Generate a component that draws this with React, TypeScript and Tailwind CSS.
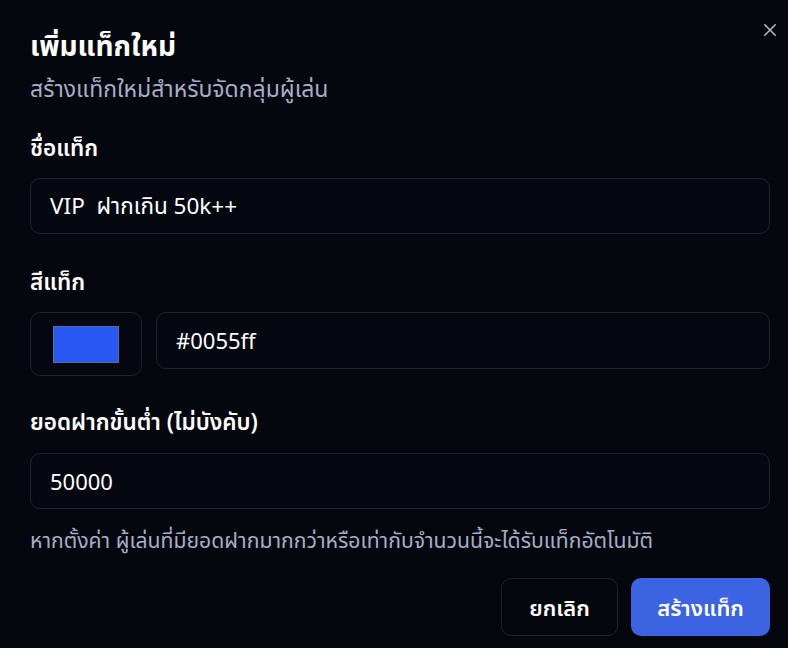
import React from "react";

export default function App() {
  return (
    <div
      className="w-[788px] h-[648px] bg-[#05070f] text-white relative overflow-hidden"
      style={{ fontFamily: '"Noto Sans", "Noto Sans Thai", sans-serif' }}
    >
      <button className="absolute right-[9px] top-[21px] text-[#b9bdc8]">
        <svg width="18" height="18" viewBox="0 0 24 24" fill="none" stroke="currentColor" strokeWidth="2" strokeLinecap="round">
          <path d="M5 5L19 19M19 5L5 19" />
        </svg>
      </button>
      <div className="px-[30px] pt-[26px] pr-[18px] flex flex-col">
        <h1 className="text-[28px] font-bold leading-[38px]">เพิ่มแท็กใหม่</h1>
        <p className="text-[23px] leading-[32px] text-[#a6aec6] mt-[8px]">สร้างแท็กใหม่สำหรับจัดกลุ่มผู้เล่น</p>

        <label className="mt-[28px] text-[22.5px] font-semibold leading-[32px]">ชื่อแท็ก</label>
        <div className="mt-[14px] h-[56px] rounded-[10px] border border-[#1f2331] bg-[#060811] flex items-center px-[19px] text-[22.5px]">
          VIP&nbsp; ฝากเกิน 50k++
        </div>

        <label className="mt-[32px] text-[22.5px] font-semibold leading-[32px]">สีแท็ก</label>
        <div className="mt-[14px] flex gap-[14px] items-start">
          <div className="w-[112px] h-[64px] rounded-[10px] border border-[#1f2331] bg-[#060811] flex items-center justify-center">
            <div className="w-[66px] h-[37px] bg-[#2a58f5] border border-[#5a6a9a]" />
          </div>
          <div className="flex-1 h-[57px] rounded-[10px] border border-[#1f2331] bg-[#060811] flex items-center px-[19px] text-[22px]">
            #0055ff
          </div>
        </div>

        <label className="mt-[30px] text-[22.5px] font-semibold leading-[32px]">ยอดฝากขั้นต่ำ (ไม่บังคับ)</label>
        <div className="mt-[15px] h-[56px] rounded-[10px] border border-[#1f2331] bg-[#060811] flex items-center px-[19px] text-[22px]">
          50000
        </div>
        <p className="mt-[16px] text-[21.2px] leading-[30px] text-[#a6aec6] whitespace-nowrap">
          หากตั้งค่า ผู้เล่นที่มียอดฝากมากกว่าหรือเท่ากับจำนวนนี้จะได้รับแท็กอัตโนมัติ
        </p>

        <div className="mt-[23px] flex justify-end gap-[13px]">
          <button className="w-[117px] h-[58px] rounded-[10px] border border-[#1f2331] bg-[#05070f] text-[22px] font-semibold">
            ยกเลิก
          </button>
          <button className="w-[139px] h-[58px] rounded-[10px] bg-[#3b63e2] text-[22px] font-semibold">
            สร้างแท็ก
          </button>
        </div>
      </div>
    </div>
  );
}
